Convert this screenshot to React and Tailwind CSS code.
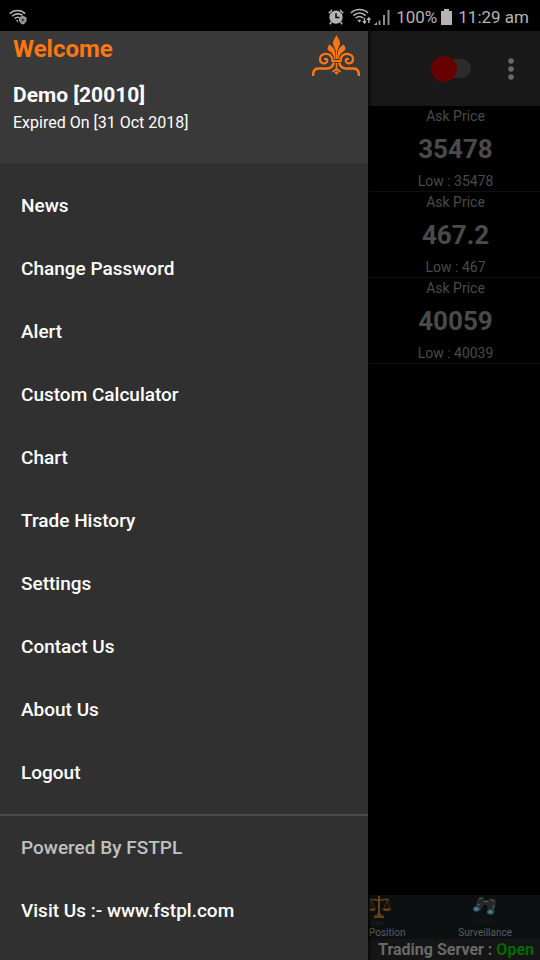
import React from 'react';

const menuItems = [
    'News',
    'Change Password',
    'Alert',
    'Custom Calculator',
    'Chart',
    'Trade History',
    'Settings',
    'Contact Us',
    'About Us',
    'Logout',
];

const quotes = [
    { id: 1, price: '35478', low: '35478' },
    { id: 2, price: '467.2', low: '467' },
    { id: 3, price: '40059', low: '40039' },
];

const WifiSecureIcon = () => (
    <svg className="w-[18px] h-[16px]" viewBox="0 0 18 16" fill="none" stroke="#b4b4b4" strokeWidth="1.6">
        <path d="M0.8 4.6C5 .4 12 .4 16.2 4.6" />
        <path d="M3.2 7.2C6.3 4.2 11 4.2 13.6 6.4" />
        <path d="M5.6 9.6C7 8.3 8.6 8 10 8.4" />
        <path d="M7 11.6l2-.8v2.6z" fill="#b4b4b4" stroke="none" />
        <path d="M10.6 8.6l3.2-1.2 3.2 1.2v2.6c0 1.9-1.5 3.1-3.2 3.8-1.7-.7-3.2-1.9-3.2-3.8z" fill="#8a8a8a" strokeWidth="1" />
        <circle cx="13.8" cy="11" r="1" fill="#222" stroke="none" />
    </svg>
);

const AlarmIcon = () => (
    <svg className="w-4 h-4" viewBox="0 0 16 16">
        <circle cx="8" cy="8.2" r="6.6" fill="#b4b4b4" />
        <path d="M.8 4.2L4 1M15.2 4.2L12 1M3.4 13l-1.6 2.2M12.6 13l1.6 2.2" stroke="#b4b4b4" strokeWidth="1.6" fill="none" />
        <path d="M8 4.2v4.4h3.4" stroke="#000" strokeWidth="1.5" fill="none" />
    </svg>
);

const WifiIcon = () => (
    <svg className="w-[22px] h-[17px]" viewBox="0 0 22 17" fill="none" stroke="#b4b4b4" strokeWidth="1.6">
        <path d="M1 5C5.6.4 13.4.4 18 5" />
        <path d="M3.4 7.6c3.5-3.4 8.7-3.4 12.2 0" />
        <path d="M5.8 10.2c2.2-2 5.2-2 7.4 0" />
        <path d="M7.4 12.4l2.1-.9 1.6.9-1.6 2.2z" fill="#b4b4b4" stroke="none" />
        <path d="M14.5 10v4M18.8 15v-4" strokeWidth="1.4" />
        <path d="M12.2 13h4.6l-2.3 3.2zM16.5 12h4.6l-2.3-3.2z" fill="#b4b4b4" stroke="none" />
    </svg>
);

const SignalIcon = () => (
    <svg className="w-4 h-4" viewBox="0 0 16 16">
        <path d="M0 16l3-3v3z" fill="#b4b4b4" />
        <path d="M4.5 11.5h2V16h-2zM9 6h2v10H9zM13.5 1h2v15h-2z" fill="#8c8c8c" />
    </svg>
);

const BatteryIcon = () => (
    <svg className="w-[11px] h-[16px]" viewBox="0 0 11 16">
        <path d="M3 0h5v2h3v14H0V2h3z" fill="#b4b4b4" />
    </svg>
);

const CrestIcon = () => (
    <svg className="w-12 h-[41px]" viewBox="0 0 48 41" fill="#ff7712">
        <path d="M24.5 0C25.5 3 28 5 28 8c0 2.5-2 4-2.5 7.5h-2C23 12 21 10.5 21 8c0-3 2.500-5 3.500-8z" />
        <path d="M17 9.500c3 1.500 5.200 3.500 6.100 7 .4 2 .5 5 .5 7.500h-1.300c-.6-3.500-1.700-5.500-3.800-7-2-1.500-3-2-3-3.500 0-1.500 1.300-2.500 1.500-4z" />
        <path d="M32 9.500c-3 1.500-5.200 3.500-6.100 7-.4 2-.5 5-.5 7.500h1.300c.6-3.500 1.700-5.500 3.800-7 2-1.500 3-2 3-3.500 0-1.500-1.300-2.500-1.500-4z" />
        <path d="M24 15h1v9h-1z" />
        <g fill="none" stroke="#ff7712" strokeWidth="2.2" strokeLinecap="round">
            <path d="M20.500 24.500C19.500 20.500 16.500 18.700 13.500 18.900c-4 .2-5.700 3-5.500 5.700.3 4 5.200 5 6.900 2.400 1.200-2-.3-3.700-1.900-3" />
            <path d="M28.500 24.500c1-4 4-5.800 7-5.600 4 .2 5.700 3 5.500 5.700-.3 4-5.200 5-6.900 2.400-1.200-2 .3-3.700 1.900-3" />
            <path d="M20 26h9" />
            <path d="M21.500 28.500c-1 3.500-3 5-6.500 5H6.500C3 33.500 1.200 36 1 40" strokeWidth="2.600" />
            <path d="M27.500 28.500c1 3.500 3 5 6.500 5h7.500c3.500 0 5.300 2.500 5.500 6.500" strokeWidth="2.600" />
            <path d="M24.500 28.500v5M24.500 34l-3.500 2.500M24.500 34l3.500 2.500" strokeWidth="1.600" />
        </g>
        <path d="M24.500 36l2.200 1.600-2.200 2.200-2.200-2.200z" />
    </svg>
);

const ScalesIcon = () => (
    <svg className="w-6 h-8" viewBox="0 0 24 32">
        <g fill="none" stroke="#6a4012" strokeWidth="1.5">
            <path d="M1 5c3-2 6 1 9 0 3 1 6-2 10 0" />
            <path d="M2 5v8M18 5l-3 9M18 5l3 9M2 5l4 9" strokeWidth=".6" />
            <path d="M10 1v19" strokeWidth="2" />
        </g>
        <path d="M0 13.5h6.5c0 3.5-6.5 3.5-6.5 0zM13.5 13.5h8.5c0 3.5-8.5 3.5-8.5 0zM8.5 18h3l1 2.5h2.5V23H5v-2.500h2.500z" fill="#6a4012" />
        <text x="2" y="30" fontSize="7" fontFamily="Liberation Serif, serif" fill="#202626">P&amp;L</text>
    </svg>
);

const BinocularsIcon = () => (
    <svg className="w-6 h-8" viewBox="0 0 24 32">
        <path d="M5 3l5-1 1.500 3h4l1-2 5.500 2 1 3-2 9-6 1-1-8h-3.500l-3 6-6-2z" fill="#26282a" />
        <path d="M6 3.500l3.500-.7M18 4.500l4 1.500M11 6.500h4M4 9l3 1M21 10l-1 4" stroke="#55585a" strokeWidth="1.2" />
        <ellipse cx="3.5" cy="14" rx="3.4" ry="2.8" fill="#2c5868" />
        <ellipse cx="17.5" cy="17" rx="3.5" ry="2.8" fill="#2c5868" />
        <ellipse cx="3.3" cy="14" rx="1.9" ry="1.3" fill="#54828e" />
        <ellipse cx="17.3" cy="17" rx="1.9" ry="1.3" fill="#54828e" />
        <text x="0" y="28" fontSize="7" fontFamily="Liberation Serif, serif" fill="#202626">1 2 3 4</text>
    </svg>
);

const StatusBar = () => (
    <header className="flex h-[31px] items-center bg-black pl-[9px] pr-[11px] pt-0.5 text-[17px] leading-5 text-[#b4b4b4]">
        <WifiSecureIcon />
        <div className="ml-auto flex items-center">
            <AlarmIcon />
            <span className="ml-1.5"><WifiIcon /></span>
            <span className="ml-0.5"><SignalIcon /></span>
            <span className="ml-1.5">100%</span>
            <span className="ml-1 mr-1.5"><BatteryIcon /></span>
            <span>11:29 am</span>
        </div>
    </header>
);

const Drawer = () => (
    <aside className="z-10 flex w-92 shrink-0 flex-col bg-[#303030] text-white shadow-[1px_0_4px_#000]">
        <div className="flex h-33 items-start justify-between bg-[#393939] pl-[13px] pr-2 pt-1">
            <div>
                <h1 className="text-2xl leading-7 font-bold text-[#ff7712]">Welcome</h1>
                <p className="mt-4 text-[21px] leading-8 font-bold">Demo [20010]</p>
                <p className="text-base leading-6">Expired On [31 Oct 2018]</p>
            </div>
            <CrestIcon />
        </div>
        <nav className="flex flex-col border-b-2 border-[#4b4b4b] pt-3 pb-[9px]">
            {menuItems.map((item) => (
                <button key={item} type="button" className="h-[63px] px-[21px] text-left text-[19px] font-medium">
                    {item}
                </button>
            ))}
        </nav>
        <div className="flex flex-col px-[21px] pt-px text-[19px] font-medium">
            <p className="flex h-[63px] items-center text-[#c0c0c0]">Powered By FSTPL</p>
            <a href="#visit" className="flex h-[63px] items-center">Visit Us :- www.fstpl.com</a>
        </div>
    </aside>
);

const Toolbar = () => (
    <div className="flex h-[75px] items-center justify-end bg-[#181818] pr-[21px]">
        <input
            type="checkbox"
            role="switch"
            aria-label="Trading"
            className="flex h-[19px] w-9 appearance-none items-center rounded-full bg-[#2c2c2c] before:-ml-1 before:size-[26px] before:shrink-0 before:rounded-full before:bg-[#660000] before:content-['']"
        />
        <button type="button" aria-label="More options" className="ml-8">
            <svg className="w-4 h-6" viewBox="0 0 16 24" fill="#696969">
                <circle cx="8" cy="4" r="2.8" />
                <circle cx="8" cy="12" r="2.8" />
                <circle cx="8" cy="20" r="2.8" />
            </svg>
        </button>
    </div>
);

const App = () => {
    return (
        <div className="flex min-h-screen flex-col bg-black font-['Roboto',sans-serif]">
            <StatusBar />
            <div className="flex flex-1">
                <Drawer />
                <main className="flex min-w-0 flex-1 flex-col">
                    <Toolbar />
                    {quotes.map((quote) => (
                        <section key={quote.id} className="flex flex-col border-b border-[#101010] pl-[3px] text-center text-sm text-[#4a4a4a]">
                            <p className="leading-[21px]">Ask Price</p>
                            <p className="py-2 text-[26px] leading-7 font-bold">{quote.price}</p>
                            <p className="leading-5">Low : {quote.low}</p>
                        </section>
                    ))}
                    <div className="mt-auto flex justify-between bg-[#0c1010] pr-7 text-[10px] leading-3 text-[#5a5c5c]">
                        <button type="button" className="flex flex-col items-start pl-px">
                            <ScalesIcon />
                            <span>Position</span>
                        </button>
                        <button type="button" className="flex flex-col items-center">
                            <BinocularsIcon />
                            <span>Surveillance</span>
                        </button>
                    </div>
                    <p className="bg-[#151515] pr-1.5 text-right text-base leading-[21px] font-bold whitespace-nowrap text-[#696969]">
                        Trading Server : <span className="text-[#006a00]">Open</span>
                    </p>
                </main>
            </div>
        </div>
    );
};

export default App;
